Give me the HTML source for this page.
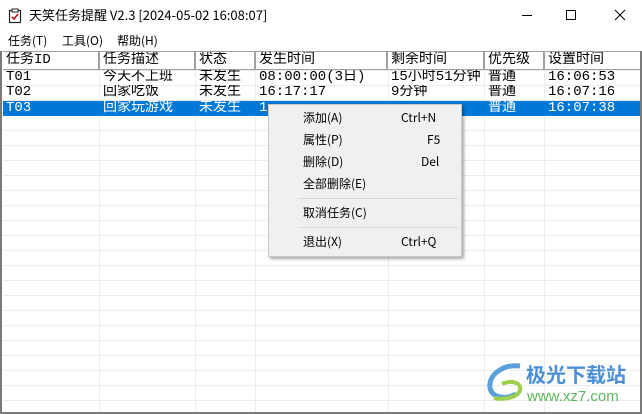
<!DOCTYPE html>
<html style="width:642px;height:414px;overflow:hidden"><head><meta charset="utf-8"><style>
*{margin:0;padding:0;box-sizing:border-box}
body{width:642px;height:414px;position:relative;overflow:hidden;background:#fff;font-family:"Liberation Sans","Noto Sans CJK SC",sans-serif;font-size:12px;color:#000}
.a{position:absolute;white-space:nowrap}
.list{position:absolute;left:3px;top:51px;width:637px;height:361px;background:#fff;
background-image:repeating-linear-gradient(to bottom,transparent 0,transparent 14px,#ececec 14px,#ececec 15px);background-position:0 65px;background-size:100% 15px}
.vl{position:absolute;top:51px;width:1px;height:361px;background:#ececec}
.hd{position:absolute;top:51px;height:19px;background:#fff;border-top:1px solid #a0a0a0;border-bottom:1px solid #a0a0a0}
.hc{position:absolute;top:52px;height:17px;font-size:14px;line-height:17px;padding-left:3px;border-right:2px solid #a0a0a0;font-family:"Liberation Mono","Noto Sans CJK SC",monospace;overflow:hidden}
.cell{position:absolute;font-size:14px;line-height:15px;height:15px;padding-left:3px;font-family:"Liberation Mono","Noto Sans CJK SC",monospace;overflow:hidden}
.m{position:absolute;font-size:12px;line-height:16px;font-family:"Noto Sans CJK SC",sans-serif}
</style></head><body>
<svg class="a" style="left:8px;top:8px" width="14" height="16" viewBox="0 0 14 16"><rect x="1.5" y="2.5" width="11" height="12" fill="none" stroke="#222" stroke-width="1.2"/><rect x="4" y="1" width="6" height="3" fill="#fff" stroke="#222"/><path d="M4 9l2 2 4-5" stroke="#c00" stroke-width="1.5" fill="none"/></svg>
<div class="a" style="left:29px;top:6px;font-size:13px;line-height:18px;font-family:'Noto Sans CJK SC',sans-serif">天笑任务提醒 V2.3 [2024-05-02 16:08:07]</div>
<div class="a" style="left:522px;top:15px;width:10px;height:1px;background:#000"></div>
<div class="a" style="left:566px;top:10px;width:10px;height:10px;border:1px solid #000"></div>
<svg class="a" style="left:614px;top:9px" width="12" height="12"><path d="M1 1L11 11M11 1L1 11" stroke="#000" stroke-width="1"/></svg>
<div class="m" style="left:8px;top:33px">任务(T)</div>
<div class="m" style="left:62px;top:33px">工具(O)</div>
<div class="m" style="left:117px;top:33px">帮助(H)</div>
<div class="list"></div>
<div class="vl" style="left:99px"></div><div class="vl" style="left:195px"></div><div class="vl" style="left:255px"></div><div class="vl" style="left:388px"></div><div class="vl" style="left:484px"></div><div class="vl" style="left:544px"></div>
<div class="hd" style="left:3px;width:637px"></div>
<div class="hc" style="left:3px;width:97px">任务ID</div>
<div class="hc" style="left:100px;width:96px">任务描述</div>
<div class="hc" style="left:196px;width:60px">状态</div>
<div class="hc" style="left:256px;width:132px">发生时间</div>
<div class="hc" style="left:388px;width:97px">剩余时间</div>
<div class="hc" style="left:485px;width:60px">优先级</div>
<div class="hc" style="left:545px;width:95px;border-right:none">设置时间</div>
<div class="a" style="left:3px;top:101px;width:637px;height:15px;background:#0078d7"></div>
<div class="cell" style="left:3px;top:70px">T01</div><div class="cell" style="left:100px;top:70px">今天不上班</div><div class="cell" style="left:196px;top:70px">未发生</div><div class="cell" style="left:256px;top:70px">08:00:00(3日)</div><div class="cell" style="left:388px;top:70px">15小时51分钟</div><div class="cell" style="left:485px;top:70px">普通</div><div class="cell" style="left:545px;top:70px">16:06:53</div>
<div class="cell" style="left:3px;top:85px">T02</div><div class="cell" style="left:100px;top:85px">回家吃饭</div><div class="cell" style="left:196px;top:85px">未发生</div><div class="cell" style="left:256px;top:85px">16:17:17</div><div class="cell" style="left:388px;top:85px">9分钟</div><div class="cell" style="left:485px;top:85px">普通</div><div class="cell" style="left:545px;top:85px">16:07:16</div>
<div class="cell" style="left:3px;top:101px;color:#fff">T03</div><div class="cell" style="left:100px;top:101px;color:#fff">回家玩游戏</div><div class="cell" style="left:196px;top:101px;color:#fff">未发生</div><div class="cell" style="left:256px;top:101px;color:#fff">1</div><div class="cell" style="left:485px;top:101px;color:#fff">普通</div><div class="cell" style="left:545px;top:101px;color:#fff">16:07:38</div>
<div class="a" style="left:268px;top:104px;width:194px;height:153px;background:#f0f0f0;border:1px solid #c8c8c8;box-shadow:2px 2px 3px rgba(0,0,0,.35)"></div>
<div class="m" style="left:303px;top:110px">添加(A)</div><div class="m" style="left:401px;top:110px">Ctrl+N</div>
<div class="m" style="left:303px;top:132px">属性(P)</div><div class="m" style="left:427px;top:132px">F5</div>
<div class="m" style="left:303px;top:154px">删除(D)</div><div class="m" style="left:421px;top:154px">Del</div>
<div class="m" style="left:303px;top:176px">全部删除(E)</div>
<div class="a" style="left:299px;top:198px;width:159px;height:1px;background:#d5d5d5"></div>
<div class="m" style="left:303px;top:205px">取消任务(C)</div>
<div class="a" style="left:299px;top:227px;width:159px;height:1px;background:#d5d5d5"></div>
<div class="m" style="left:303px;top:234px">退出(X)</div><div class="m" style="left:401px;top:234px">Ctrl+Q</div>
<svg class="a" style="left:482px;top:362px" width="46" height="40"><path d="M38 4C22 2 6 12 8 26c2 10 16 12 26 6" stroke="#5aa0dc" stroke-width="5" fill="none"/><path d="M20 22c8-4 20-2 18 6s-18 10-26 8" stroke="#9cd04c" stroke-width="4" fill="none"/></svg>
<div class="a" style="left:526px;top:361px;font-size:20px;line-height:26px;font-weight:bold;color:#4a8fd6;font-family:'Noto Sans CJK SC',sans-serif">极光下载站</div>
<div class="a" style="left:527px;top:388px;font-size:15px;line-height:17px;color:#5cb85c">www.xz7.com</div>
<div class="a" style="left:0;top:51px;width:2px;height:363px;background:#7a7a7a"></div>
<div class="a" style="left:0;top:412px;width:642px;height:2px;background:#7a7a7a"></div>
<div class="a" style="left:640px;top:51px;width:2px;height:363px;background:#7a7a7a"></div>
</body></html>
